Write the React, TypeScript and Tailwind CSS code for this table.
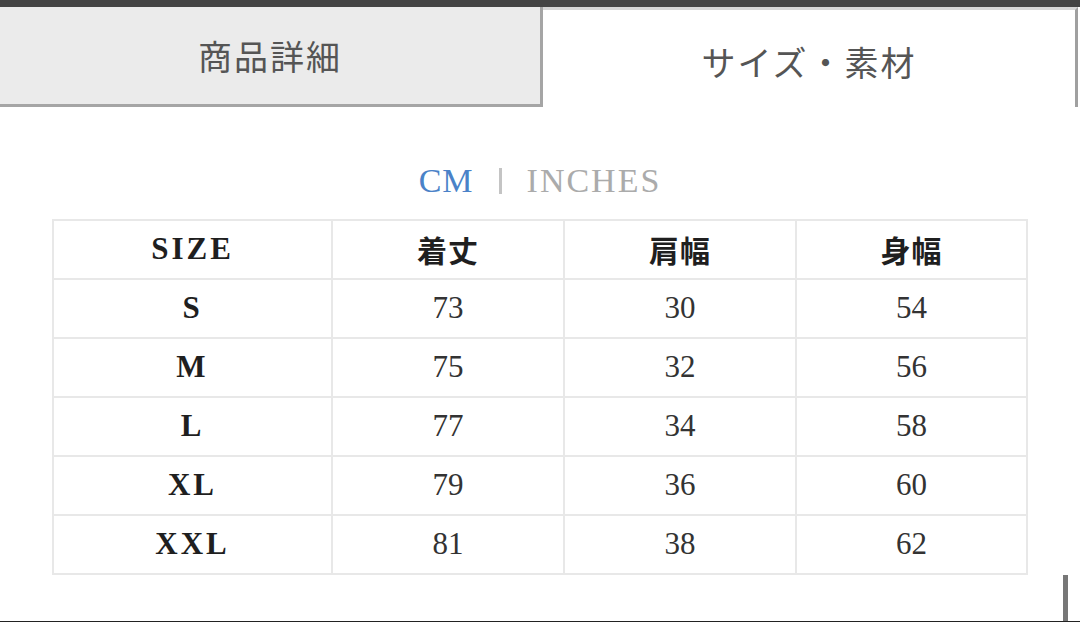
const rows = [
  { size: "S", length: 73, shoulder: 30, width: 54 },
  { size: "M", length: 75, shoulder: 32, width: 56 },
  { size: "L", length: 77, shoulder: 34, width: 58 },
  { size: "XL", length: 79, shoulder: 36, width: 60 },
  { size: "XXL", length: 81, shoulder: 38, width: 62 }
]

const serif = "font-['Liberation_Serif','Times_New_Roman',serif]"
const jp = "font-['Noto_Sans_CJK_JP','Noto_Sans',sans-serif]"

const cell = "border-2 border-[#e8e8e8] h-[59px] p-0 text-center align-middle"

export default function App() {
  return (
    <div className="w-[1080px] h-[622px] bg-white overflow-hidden flex flex-col">
      <div className="h-[7px] bg-[#444444] shrink-0" />
      <div className="flex h-[100px] shrink-0">
        <div
          className={`w-[543px] flex items-center justify-center bg-[#ebebeb] border-r-[3px] border-b-[3px] border-[#a5a5a5] text-[#555555] text-[34px] tracking-[2px] ${jp}`}>
          商品詳細
        </div>
        <div
          className={`w-[535px] flex items-center justify-center bg-white border-t-[3px] border-t-[#d6d6d6] border-r-[3px] border-r-[#a0a0a0] pt-[6px] text-[#555555] text-[34px] tracking-[2px] ${jp}`}>
          サイズ・素材
        </div>
      </div>

      <div className={`mt-[57px] flex items-center justify-center gap-[25px] text-[34px] leading-none tracking-[1px] ${serif}`}>
        <span className="text-[#4a82c8]">CM</span>
        <span className="w-[3px] h-[26px] bg-[#c4c4c4]" />
        <span className="text-[#ababab] tracking-[2px]">INCHES</span>
      </div>

      <table className="mt-[21px] ml-[52px] w-[974px] border-collapse border-2 border-[#e8e8e8] table-fixed">
        <colgroup>
          <col className="w-[279px]" />
          <col className="w-[232px]" />
          <col className="w-[232px]" />
          <col className="w-[231px]" />
        </colgroup>
        <thead>
          <tr>
            <th className={`${cell} ${serif} font-bold text-[31px] tracking-[3px] text-[#1f1f1f]`}>SIZE</th>
            <th className={`${cell} ${jp} font-bold text-[30px] tracking-[1px] text-[#1f1f1f]`}>着丈</th>
            <th className={`${cell} ${jp} font-bold text-[30px] tracking-[1px] text-[#1f1f1f]`}>肩幅</th>
            <th className={`${cell} ${jp} font-bold text-[30px] tracking-[1px] text-[#1f1f1f]`}>身幅</th>
          </tr>
        </thead>
        <tbody>
          {rows.map((r) => (
            <tr key={r.size}>
              <td className={`${cell} ${serif} font-bold text-[31px] tracking-[3px] text-[#1f1f1f]`}>{r.size}</td>
              <td className={`${cell} ${serif} text-[31px] text-[#333333]`}>{r.length}</td>
              <td className={`${cell} ${serif} text-[31px] text-[#333333]`}>{r.shoulder}</td>
              <td className={`${cell} ${serif} text-[31px] text-[#333333]`}>{r.width}</td>
            </tr>
          ))}
        </tbody>
      </table>

      <div className="flex-1 flex justify-end items-end pr-[12px]">
        <div className="w-[5px] h-[46px] bg-[#777777]" />
      </div>
      <div className="h-[2px] bg-[#222222] shrink-0" />
    </div>
  )
}
